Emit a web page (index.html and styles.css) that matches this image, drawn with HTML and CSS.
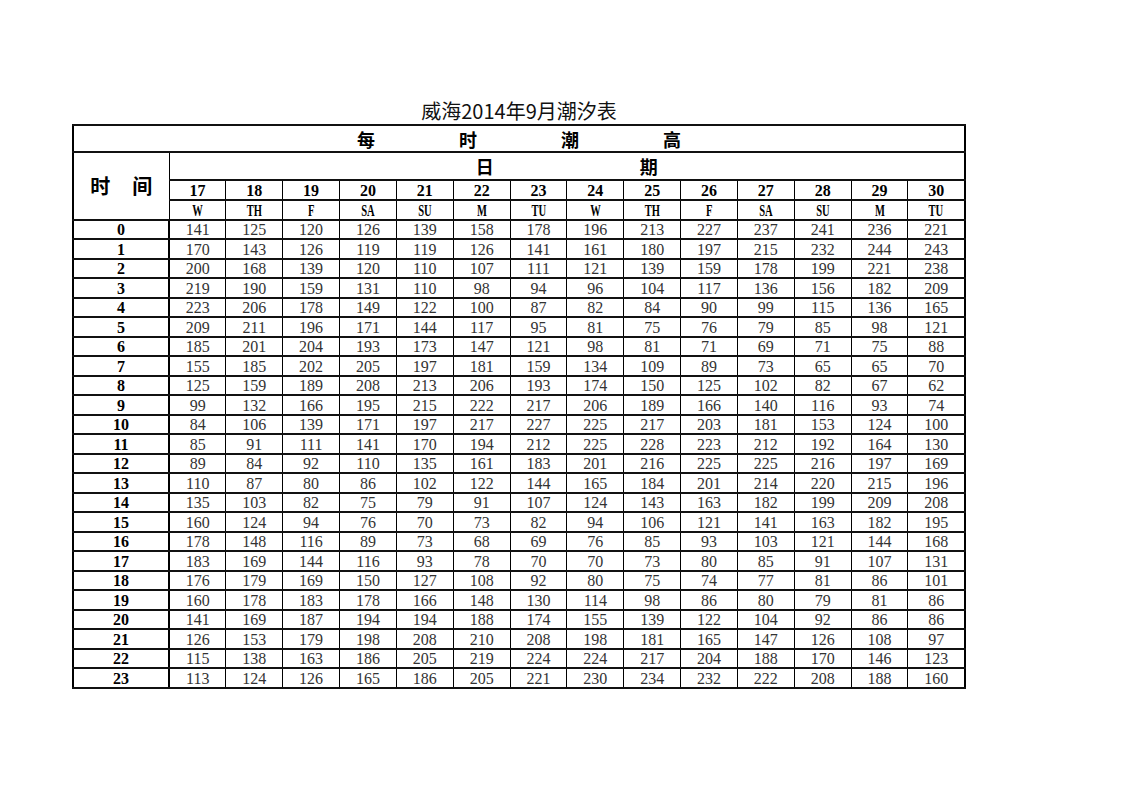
FILE: index.html
```html
<!DOCTYPE html>
<html lang="zh">
<head>
<meta charset="utf-8">
<title>威海2014年9月潮汐表</title>
<link rel="stylesheet" href="styles.css">
</head>
<body>
<div class="sheet">
  <div class="title">威海2014年9月潮汐表</div>
  <table class="tide">
    <colgroup>
      <col class="c-time">
      <col><col><col><col><col><col><col><col><col><col><col><col><col><col>
    </colgroup>
    <thead>
      <tr class="r-head1"><th colspan="15" class="spread1"><span>每</span><span>时</span><span>潮</span><span>高</span></th></tr>
      <tr class="r-head2">
        <th rowspan="3" class="time-head"><span>时</span><span>间</span></th>
        <th colspan="14" class="spread2"><span>日</span><span>期</span></th>
      </tr>
      <tr class="r-date" id="dates"></tr>
      <tr class="r-week" id="weeks"></tr>
    </thead>
    <tbody id="body"></tbody>
  </table>
</div>
<script src="app.js"></script>
</body>
</html>
```
FILE: app.js
```js
const dates = [17,18,19,20,21,22,23,24,25,26,27,28,29,30];
const weeks = ["W","TH","F","SA","SU","M","TU","W","TH","F","SA","SU","M","TU"];
const data = [
[141,125,120,126,139,158,178,196,213,227,237,241,236,221],
[170,143,126,119,119,126,141,161,180,197,215,232,244,243],
[200,168,139,120,110,107,111,121,139,159,178,199,221,238],
[219,190,159,131,110,98,94,96,104,117,136,156,182,209],
[223,206,178,149,122,100,87,82,84,90,99,115,136,165],
[209,211,196,171,144,117,95,81,75,76,79,85,98,121],
[185,201,204,193,173,147,121,98,81,71,69,71,75,88],
[155,185,202,205,197,181,159,134,109,89,73,65,65,70],
[125,159,189,208,213,206,193,174,150,125,102,82,67,62],
[99,132,166,195,215,222,217,206,189,166,140,116,93,74],
[84,106,139,171,197,217,227,225,217,203,181,153,124,100],
[85,91,111,141,170,194,212,225,228,223,212,192,164,130],
[89,84,92,110,135,161,183,201,216,225,225,216,197,169],
[110,87,80,86,102,122,144,165,184,201,214,220,215,196],
[135,103,82,75,79,91,107,124,143,163,182,199,209,208],
[160,124,94,76,70,73,82,94,106,121,141,163,182,195],
[178,148,116,89,73,68,69,76,85,93,103,121,144,168],
[183,169,144,116,93,78,70,70,73,80,85,91,107,131],
[176,179,169,150,127,108,92,80,75,74,77,81,86,101],
[160,178,183,178,166,148,130,114,98,86,80,79,81,86],
[141,169,187,194,194,188,174,155,139,122,104,92,86,86],
[126,153,179,198,208,210,208,198,181,165,147,126,108,97],
[115,138,163,186,205,219,224,224,217,204,188,170,146,123],
[113,124,126,165,186,205,221,230,234,232,222,208,188,160]
];
const dRow = document.getElementById("dates");
dates.forEach(d => { const th = document.createElement("th"); th.textContent = d; dRow.appendChild(th); });
const wRow = document.getElementById("weeks");
weeks.forEach(w => { const th = document.createElement("th"); const s = document.createElement("span"); s.className = "wk"; s.textContent = w; th.appendChild(s); wRow.appendChild(th); });
const body = document.getElementById("body");
data.forEach((row, i) => {
  const tr = document.createElement("tr");
  const th = document.createElement("th");
  th.className = "hour";
  th.textContent = i;
  tr.appendChild(th);
  row.forEach(v => { const td = document.createElement("td"); td.textContent = v; tr.appendChild(td); });
  body.appendChild(tr);
});
```
FILE: styles.css
```css
html, body {
  margin: 0;
  padding: 0;
  background: #fff;
}
.sheet {
  padding: 98px 0 0 72px;
  width: 894px;
}
.title {
  font-family: "Noto Sans CJK SC", sans-serif;
  font-size: 20px;
  line-height: 26px;
  text-align: center;
  color: #111;
}
.tide {
  border-collapse: collapse;
  table-layout: fixed;
  width: 894px;
  border: 2px solid #000;
  font-family: "Liberation Serif", "Noto Sans CJK SC", serif;
  color: #000;
}
.c-time { width: 96px; }
.tide th, .tide td {
  border-left: 1px solid #000;
  border-right: 1px solid #000;
  border-top: 2px solid #111;
  border-bottom: 2px solid #111;
  padding: 0;
  text-align: center;
  overflow: hidden;
  white-space: nowrap;
}
.r-head1 { height: 27px; }
.r-head2 { height: 28px; }
.r-date { height: 20px; }
.r-week { height: 20px; }
.spread1, .spread2, .time-head {
  font-family: "Noto Sans CJK SC", sans-serif;
  font-weight: 700;
  font-size: 18px;
  line-height: 22px;
}
.spread1 span { display: inline-block; margin: 0 42px; }
.spread2 span { display: inline-block; margin: 0 73px; }
.time-head { font-size: 20px; border-right: 2px solid #000; }
.time-head span { display: inline-block; margin: 0 11px; }
.r-date th {
  font-size: 16px;
  font-weight: 700;
  line-height: 17px;
  border-bottom: 1px solid #000;
}
.r-week th {
  font-size: 17px;
  font-weight: 700;
  line-height: 17px;
}
.wk { display: inline-block; transform: scaleX(0.62); }
.tide tbody tr { height: 19px; }
.tide tbody tr:nth-child(even) { height: 20px; }
.tide td {
  font-size: 16px;
  line-height: 17px;
  color: #333;
}
.hour {
  font-size: 16px;
  font-weight: 700;
  line-height: 17px;
  border-right: 2px solid #000 !important;
}
```
